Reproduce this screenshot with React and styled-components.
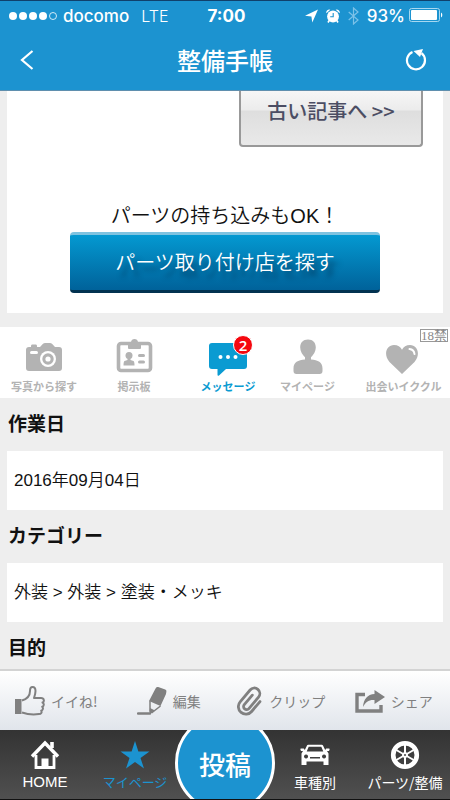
import React from "react";
import styled, { createGlobalStyle } from "styled-components";

const blue = "#1c93d0";
const grey = "#b3b3b3";
const jp = '"Noto Sans CJK JP", sans-serif';

const GlobalStyle = createGlobalStyle`
  * {
    box-sizing: border-box;
  }
  body {
    margin: 0;
    background: #eee;
    color: #111;
    font-family: "Liberation Sans", ${jp};
  }
  a {
    color: inherit;
    text-decoration: none;
  }
  button {
    margin: 0;
    padding: 0;
    border: 0;
    background: none;
    color: inherit;
    font: inherit;
    cursor: pointer;
  }
  svg {
    display: block;
    flex: none;
  }
`;

const Screen = styled.div`
  display: flex;
  flex-direction: column;
  height: 100vh;
`;

const Header = styled.header`
  flex: none;
  background: ${blue};
  color: #fff;
  border-top: 1px solid #10406b;
  border-bottom: 1px solid #5f8fae;
`;

const StatusBar = styled.div`
  display: grid;
  grid-template-columns: 1fr auto 1fr;
  align-items: center;
  height: 29px;
  padding: 0 6px 0 9px;
  font-family: Inter, sans-serif;
  font-size: 17px;
  font-weight: 500;
`;

const StatusGroup = styled.div`
  display: flex;
  align-items: center;
  justify-content: ${(props) => (props.$end ? "flex-end" : "flex-start")};
  gap: ${(props) => (props.$end ? "8px" : "6px")};
`;

const Network = styled.span`
  margin-left: 6px;
  font-size: 16px;
  font-weight: 300;
`;

const Clock = styled.span`
  font-weight: 700;
`;

const BatteryGroup = styled.span`
  display: flex;
  align-items: center;
  gap: 4px;
`;

const NavBar = styled.div`
  display: grid;
  grid-template-columns: 60px 1fr 60px;
  align-items: center;
  height: 60px;
`;

const NavButton = styled.button`
  display: flex;
  justify-content: ${(props) => (props.$end ? "flex-end" : "flex-start")};
  padding: 0 ${(props) => (props.$end ? "23px" : "20px")};
`;

const Title = styled.h1`
  margin: 0;
  text-align: center;
  font-family: ${jp};
  font-size: 24px;
  font-weight: 500;
  line-height: 36px;
`;

const Content = styled.main`
  flex: 1;
  min-height: 0;
  overflow-y: auto;
  scrollbar-width: none;
`;

const Article = styled.section`
  display: flex;
  flex-direction: column;
  align-items: center;
  margin: 0 7px 14px;
  padding-bottom: 20px;
  background: #fff;
`;

const OlderButton = styled.button`
  align-self: flex-end;
  width: 184px;
  height: 56px;
  margin-right: 20px;
  padding-bottom: 14px;
  border: 2px solid #999;
  border-top: 0;
  border-radius: 0 0 4px 4px;
  background: linear-gradient(#f6f6f6, #ececec 19px, #dedede 20px, #e9e9e9);
  color: #4b4d63;
  font-family: ${jp};
  font-size: 20px;
  font-weight: 500;
  line-height: 30px;
`;

const Lead = styled.p`
  margin: 54px 0 1px;
  font-size: 20px;
  font-weight: 350;
  line-height: 30px;
`;

const ShopButton = styled.button`
  width: 310px;
  max-width: 100%;
  height: 61px;
  padding-bottom: 2px;
  border-top: 3px solid #7fc3e0;
  border-bottom: 3px solid #023250;
  border-radius: 4px;
  background: linear-gradient(#0499d1, #00629a);
  color: #fff;
  font-family: ${jp};
  font-size: 20px;
  font-weight: 350;
  line-height: 30px;
  text-shadow: 5px 7px 5px rgba(0, 30, 60, 0.5);
`;

const Banner = styled.nav`
  position: relative;
  display: grid;
  grid-template-columns: 88fr 92fr 96fr 63fr 111fr;
  padding: 10px 0 4px;
  background: #fff;
`;

const BannerLink = styled.a`
  display: flex;
  flex-direction: column;
  align-items: center;
  gap: 1px;
  color: ${(props) => (props.$active ? "#0a9bd2" : grey)};
  font-family: ${jp};
  font-size: 11px;
  font-weight: 700;
  line-height: 16px;
  white-space: nowrap;

  &:last-of-type {
    padding-left: 18px;
  }
`;

const IconWrap = styled.span`
  position: relative;
`;

const Badge = styled.span`
  position: absolute;
  top: -2px;
  right: -5px;
  width: 20px;
  height: 20px;
  border: 1px solid #fff;
  border-radius: 50%;
  background: #f5080f;
  color: #fff;
  font-family: "Open Sans", sans-serif;
  font-size: 15px;
  font-weight: 600;
  line-height: 18px;
  text-align: center;
`;

const AgeMark = styled.span`
  position: absolute;
  top: 2px;
  right: 2px;
  border: 1px solid #999;
  color: #888;
  font-family: "Liberation Serif", ${jp};
  font-size: 13px;
  line-height: 11px;
`;

const Heading = styled.h2`
  margin: 0;
  padding: 10px 8px 14px;
  font-family: ${jp};
  font-size: 19px;
  font-weight: 700;
  line-height: 29px;
`;

const Panel = styled.p`
  margin: 0 7px;
  padding: 16px 7px;
  background: #fff;
  font-size: 17px;
  font-weight: 350;
  line-height: 27px;
`;

const Footer = styled.footer`
  flex: none;
`;

const Actions = styled.div`
  display: grid;
  grid-template-columns: repeat(4, 1fr);
  height: 61px;
  border-top: 2px solid #d3d3d3;
  background: linear-gradient(#fff, #e1e5eb);
`;

const Action = styled.button`
  display: flex;
  align-items: center;
  justify-content: center;
  gap: 6px;
  color: #808080;
  font-family: ${jp};
  font-size: 14px;
  white-space: nowrap;
`;

const Tabs = styled.nav`
  display: grid;
  grid-template-columns: repeat(5, minmax(0, 1fr));
  height: 70px;
  overflow: hidden;
  border-bottom: 1px solid #111;
  background: linear-gradient(#333, #505050);
`;

const Tab = styled.a`
  display: flex;
  flex-direction: column;
  align-items: center;
  padding-top: 10px;
  color: ${(props) => (props.$active ? blue : "#fff")};
  font-family: ${(props) => (props.$latin ? '"Liberation Sans", sans-serif' : jp)};
  font-size: ${(props) => (props.$active ? "13px" : props.$latin ? "15px" : "14px")};
  line-height: 24px;
  white-space: nowrap;
`;

const PostTab = styled.button`
  justify-self: center;
  width: 100px;
  height: 100px;
  margin-top: -17px;
  border: 3px solid #fff;
  border-radius: 50%;
  background: ${blue};
  color: #fff;
  font-family: ${jp};
  font-size: 26px;
  font-weight: 500;
`;

const Signal = () => (
  <svg width="48" height="10" fill="#fff">
    <circle cx="4" cy="5" r="4" />
    <circle cx="14" cy="5" r="4" />
    <circle cx="24" cy="5" r="4" />
    <circle cx="34" cy="5" r="4" />
    <circle cx="44" cy="5" r="3.5" fill="none" stroke="#fff" strokeWidth="0.8" />
  </svg>
);

const LocationIcon = () => (
  <svg width="13" height="14" fill="#fff">
    <path d="M13 0.5 7.3 13.5 6.4 7.4 0 6.7Z" />
  </svg>
);

const AlarmIcon = () => (
  <svg width="14" height="14" fill="#fff">
    <circle cx="7" cy="7.5" r="5.9" />
    <path d="M0.3 4.2A3 3 0 0 1 4.3 0.8ZM13.7 4.2A3 3 0 0 0 9.7 0.8Z" />
    <path d="m3.2 11.5-1.2 2M10.8 11.5l1.2 2" stroke="#fff" strokeWidth="1.6" />
    <path d="M7.2 4v3.8H4.2" fill="none" stroke={blue} strokeWidth="1.1" />
  </svg>
);

const BluetoothIcon = () => (
  <svg width="11" height="18" fill="none" stroke="#7cc2e8" strokeWidth="1.2">
    <path d="M0.7 5 10 13 5.5 17V1L10 5 0.7 13" />
  </svg>
);

const BatteryIcon = () => (
  <svg width="35" height="15">
    <rect x="0.5" y="0.5" width="30" height="13" rx="2" fill="none" stroke="#a8d8f0" />
    <rect x="2" y="2" width="26" height="10" rx="1" fill="#fff" />
    <path d="M32 4.5a3 3 0 0 1 0 5Z" fill="#fff" />
  </svg>
);

const BackIcon = () => (
  <svg width="14" height="20" fill="none" stroke="#fff" strokeWidth="2.2">
    <path d="M12.500 1 2 10l10.500 9" />
  </svg>
);

const ReloadIcon = () => (
  <svg width="22" height="22" fill="none" stroke="#fff" strokeWidth="2.2">
    <path d="M7.500 3A9 9 0 1 0 16.500 4.200" />
    <path d="M8.500 2 18 0 15 8Z" fill="#fff" stroke="none" />
  </svg>
);

const CameraIcon = () => (
  <svg width="40" height="40" fill={grey}>
    <path d="M5 10h2V9q0-1.500 1-1.500h4q1 0 1 1.500v1h3l3-3.200Q20 6 21 6h5q1 0 2 .8L31 10h4q3 0 3 3v18q0 3-3 3H5q-3 0-3-3V13q0-3 3-3Z" />
    <rect x="6" y="14" width="8" height="3" rx="1.5" fill="#fff" />
    <circle cx="24" cy="22" r="8" fill="#fff" />
    <circle cx="24" cy="22" r="5.7" />
    <circle cx="24" cy="22" r="2.6" fill="#fff" />
  </svg>
);

const BoardIcon = () => (
  <svg width="40" height="40" fill={grey}>
    <rect x="4.5" y="6.5" width="32" height="27" rx="2.5" fill="none" stroke={grey} strokeWidth="3.6" />
    <path d="M14 5h3q.5-3 3.500-3t3.500 3h3v6q0 1-1 1H15q-1 0-1-1Z" />
    <circle cx="15" cy="18.5" r="3.5" />
    <path d="M13.500 21h3v2l3 1q1 .5 1 4.500h-11q0-4 1-4.500l3-1Z" />
    <rect x="24" y="17" width="7" height="3" rx="1.5" />
    <rect x="24" y="23.5" width="7" height="3" rx="1.5" />
  </svg>
);

const ChatIcon = () => (
  <svg width="40" height="40" fill="#0a9bd2">
    <path d="M4 6h32q3 0 3 3v20q0 3-3 3H18l-7 6.500q-1.500 1-1.500-1V32H4q-3 0-3-3V9q0-3 3-3Z" />
    <g fill="#fff">
      <circle cx="12.5" cy="20" r="2" />
      <circle cx="20" cy="20" r="2" />
      <circle cx="27.5" cy="20" r="2" />
    </g>
  </svg>
);

const PersonIcon = () => (
  <svg width="40" height="40" fill={grey}>
    <path d="M20 2.500c5 0 7.800 3.200 7.800 8 0 4-2.300 7.300-4.800 9.800v2.200c7 .8 11.500 2.500 11.500 9V34q0 3-3 3h-23q-3 0-3-3v-2.500c0-6.500 4.500-8.200 11.500-9v-2.200c-2.500-2.500-4.800-5.800-4.800-9.800 0-4.800 2.800-8 7.800-8Z" />
  </svg>
);

const HeartIcon = () => (
  <svg width="40" height="40" fill={grey}>
    <path d="M18 37 5.500 25C-1 17.500 2.500 8 10 8c3.800 0 6.500 2 8 4.800C19.500 10 22.200 8 26 8c7.500 0 11 9.500 4.500 17Z" />
    <path d="M25.500 12q4.500.5 5 5" fill="none" stroke="#fff" strokeWidth="2" strokeLinecap="round" />
  </svg>
);

const ThumbIcon = () => (
  <svg width="30" height="30" fill="none" stroke="#808080" strokeWidth="2" strokeLinejoin="round">
    <path d="M0 13h6.500v15H0Z" fill="#808080" stroke="none" />
    <path d="M7 14.500c5-1.500 8-5 8-9.500 0-3 1-4 2.500-4 2 0 3 1.500 3 4 0 2.500-.8 5-1.500 7h7c3.500 0 3.500 4 1.500 4.500 2 1 1.500 3.800-.3 4.200 1.300 1.200.8 3.500-1 4 1 1.500 0 3.300-2.200 3.300-7 1-11 .5-17-1.500" />
  </svg>
);

const PencilIcon = () => (
  <svg width="30" height="30" fill="#808080">
    <path d="m18 3.500 1-1.700q.8-1.200 2.200-.7l7 2.500q1.500.7 1.200 2L29 8l-5.500 12L12 15Z" />
    <path d="M13 15v10l2 1.500 8.500-6.500" fill="none" stroke="#808080" strokeWidth="1.5" />
    <path d="m13 22-.5 6 5.500-3.500Z" />
    <path d="M1 27.500h12" fill="none" stroke="#808080" strokeWidth="2.4" strokeLinecap="round" />
  </svg>
);

const ClipIcon = () => (
  <svg width="26" height="30" viewBox="-13 -15 26 30" fill="none" stroke="#808080" strokeWidth="2.8" strokeLinecap="round">
    <path
      transform="rotate(40)"
      d="M8-6V7a7.500 7.500 0 0 1-15 0V-8.500a5.500 5.500 0 0 1 11 0V6.500a3 3 0 0 1-6 0V-6"
    />
  </svg>
);

const ShareIcon = () => (
  <svg width="30" height="30" fill="#808080">
    <path d="M10 8.500H2V25h24v-6" fill="none" stroke="#808080" strokeWidth="3.4" />
    <path d="M19.500 4 30 11l-10.500 7v-4c-5.500-.5-9 2-11.500 7 .5-8 4.500-12.500 11.500-13Z" />
  </svg>
);

const HomeIcon = () => (
  <svg width="30" height="30" fill="none" stroke="#fff">
    <path d="m2 16.500 13-13.500 13 13.500" strokeWidth="3.4" />
    <path d="M22 2v6" strokeWidth="3.6" />
    <path d="M6 15v12.500h18V15" strokeWidth="2.8" />
    <path d="M11.500 18.500h7V28h-7Z" fill="#fff" stroke="none" />
  </svg>
);

const StarIcon = () => (
  <svg width="30" height="30" fill={blue}>
    <path d="m15 1 3.400 10.500h11.100l-9 6.500 3.500 10.500-9-6.500-9 6.500L9.500 18l-9-6.500h11.100Z" />
  </svg>
);

const CarIcon = () => (
  <svg width="30" height="30" fill="#fff">
    <path
      fillRule="evenodd"
      d="M7 5.500q.3-.8 1.200-.8h13.600q.9 0 1.200.8l2.200 4.500 1-1.500H29q1 0 .5 1.300L29 11h-2l1.500 2.500V25h-5v-3.500h-17V25h-5V13.500L3 11H1l-.5-1.200Q0 8.500 1 8.500h2.800l1 1.500Zm1.700 1.200-2 4.800h16.600l-2-4.800ZM6 14.500a2 2 0 1 0 .1 0Zm18 0a2 2 0 1 0 .1 0ZM10 17v1.500h10V17Z"
    />
  </svg>
);

const WheelIcon = () => (
  <svg width="30" height="30" fill="none" stroke="#fff">
    <circle cx="15" cy="15" r="11.8" strokeWidth="4.6" />
    <circle cx="15" cy="15" r="2.5" fill="#fff" />
    <path d="M15 5v20M6.300 10l17.400 10M6.300 20l17.400-10" strokeWidth="2" />
    <circle cx="15" cy="15" r="1" fill="#444" stroke="none" />
  </svg>
);

export default () => (
  <Screen>
    <GlobalStyle />
    <Header>
      <StatusBar>
        <StatusGroup>
          <Signal />
          <span>docomo</span>
          <Network>LTE</Network>
        </StatusGroup>
        <Clock>7:00</Clock>
        <StatusGroup $end>
          <LocationIcon />
          <AlarmIcon />
          <BluetoothIcon />
          <BatteryGroup>
            93%
            <BatteryIcon />
          </BatteryGroup>
        </StatusGroup>
      </StatusBar>
      <NavBar>
        <NavButton aria-label="戻る">
          <BackIcon />
        </NavButton>
        <Title>整備手帳</Title>
        <NavButton $end aria-label="更新">
          <ReloadIcon />
        </NavButton>
      </NavBar>
    </Header>

    <Content>
      <Article>
        <OlderButton>古い記事へ &gt;&gt;</OlderButton>
        <Lead>パーツの持ち込みもOK！</Lead>
        <ShopButton>パーツ取り付け店を探す</ShopButton>
      </Article>

      <Banner>
        <BannerLink href="#photo">
          <IconWrap><CameraIcon /></IconWrap>
          <span>写真から探す</span>
        </BannerLink>
        <BannerLink href="#board">
          <IconWrap><BoardIcon /></IconWrap>
          <span>掲示板</span>
        </BannerLink>
        <BannerLink href="#message" $active>
          <IconWrap>
            <ChatIcon />
            <Badge>2</Badge>
          </IconWrap>
          <span>メッセージ</span>
        </BannerLink>
        <BannerLink href="#profile">
          <IconWrap><PersonIcon /></IconWrap>
          <span>マイページ</span>
        </BannerLink>
        <BannerLink href="#ikukuru">
          <IconWrap><HeartIcon /></IconWrap>
          <span>出会いイククル</span>
        </BannerLink>
        <AgeMark>18禁</AgeMark>
      </Banner>

      <Heading>作業日</Heading>
      <Panel>2016年09月04日</Panel>
      <Heading>カテゴリー</Heading>
      <Panel>外装 &gt; 外装 &gt; 塗装・メッキ</Panel>
      <Heading>目的</Heading>
    </Content>

    <Footer>
      <Actions>
        <Action>
          <ThumbIcon />
          イイね!
        </Action>
        <Action>
          <PencilIcon />
          編集
        </Action>
        <Action>
          <ClipIcon />
          クリップ
        </Action>
        <Action>
          <ShareIcon />
          シェア
        </Action>
      </Actions>
      <Tabs>
        <Tab href="#home" $latin>
          <HomeIcon />
          HOME
        </Tab>
        <Tab href="#mypage" $active>
          <StarIcon />
          マイページ
        </Tab>
        <PostTab>投稿</PostTab>
        <Tab href="#cars">
          <CarIcon />
          車種別
        </Tab>
        <Tab href="#parts">
          <WheelIcon />
          パーツ/整備
        </Tab>
      </Tabs>
    </Footer>
  </Screen>
);
